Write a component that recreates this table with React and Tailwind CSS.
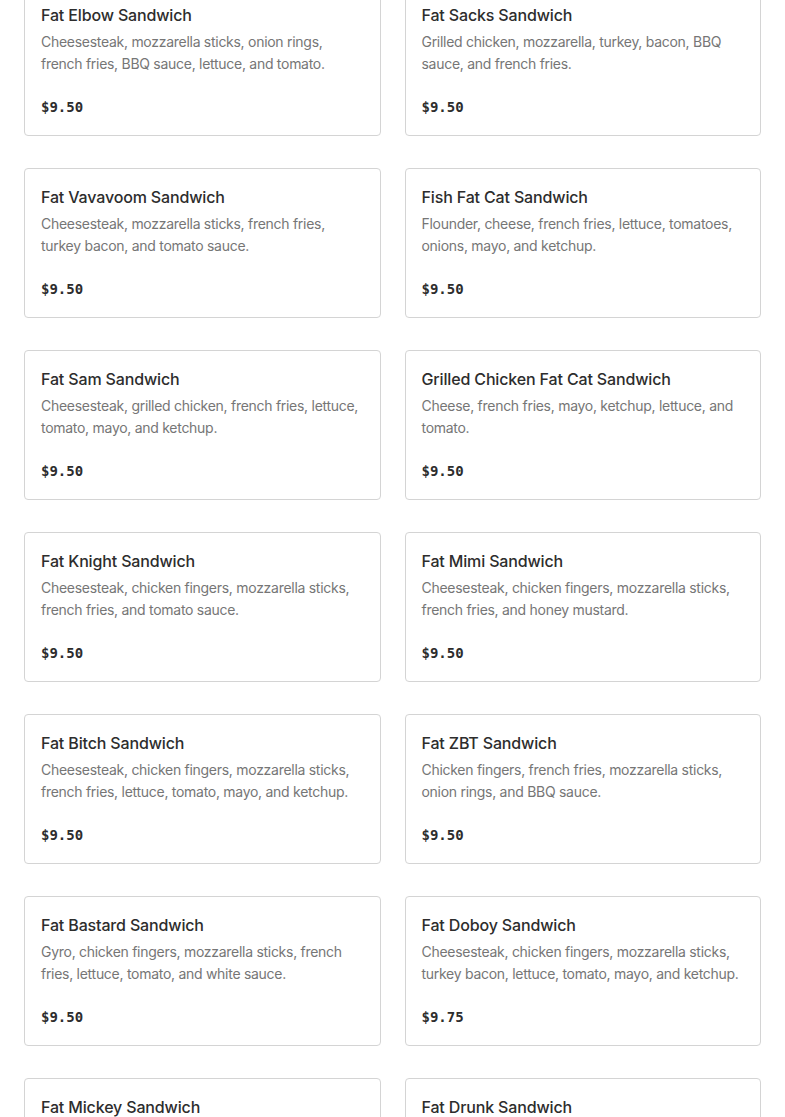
const items = [
  ["Fat Elbow Sandwich", "Cheesesteak, mozzarella sticks, onion rings, french fries, BBQ sauce, lettuce, and tomato.", "$9.50"],
  ["Fat Sacks Sandwich", "Grilled chicken, mozzarella, turkey, bacon, BBQ sauce, and french fries.", "$9.50"],
  ["Fat Vavavoom Sandwich", "Cheesesteak, mozzarella sticks, french fries, turkey bacon, and tomato sauce.", "$9.50"],
  ["Fish Fat Cat Sandwich", "Flounder, cheese, french fries, lettuce, tomatoes, onions, mayo, and ketchup.", "$9.50"],
  ["Fat Sam Sandwich", "Cheesesteak, grilled chicken, french fries, lettuce, tomato, mayo, and ketchup.", "$9.50"],
  ["Grilled Chicken Fat Cat Sandwich", "Cheese, french fries, mayo, ketchup, lettuce, and tomato.", "$9.50"],
  ["Fat Knight Sandwich", "Cheesesteak, chicken fingers, mozzarella sticks, french fries, and tomato sauce.", "$9.50"],
  ["Fat Mimi Sandwich", "Cheesesteak, chicken fingers, mozzarella sticks, french fries, and honey mustard.", "$9.50"],
  ["Fat Bitch Sandwich", "Cheesesteak, chicken fingers, mozzarella sticks, french fries, lettuce, tomato, mayo, and ketchup.", "$9.50"],
  ["Fat ZBT Sandwich", "Chicken fingers, french fries, mozzarella sticks, onion rings, and BBQ sauce.", "$9.50"],
  ["Fat Bastard Sandwich", "Gyro, chicken fingers, mozzarella sticks, french fries, lettuce, tomato, and white sauce.", "$9.50"],
  ["Fat Doboy Sandwich", "Cheesesteak, chicken fingers, mozzarella sticks, turkey bacon, lettuce, tomato, mayo, and ketchup.", "$9.75"],
  ["Fat Mickey Sandwich", "Cheesesteak, chicken fingers, mozzarella sticks, french fries, and tomato sauce.", "$9.50"],
  ["Fat Drunk Sandwich", "Cheesesteak, chicken fingers, mozzarella sticks, french fries, and tomato sauce.", "$9.50"],
];

export default function App() {
  return (
    <div className="h-[1117px] overflow-hidden bg-white" style={{ fontFamily: "Inter, 'Noto Sans', sans-serif" }}>
      <div className="grid grid-cols-2 gap-x-6 gap-y-8 px-6 mt-[-14px]">
        {items.map(([t, d, p]) => (
          <div key={t} className="h-[150px] rounded-[4px] border border-[#d4d4d4] px-4 pt-4 pb-[18px] flex flex-col">
            <div className="text-[16px] leading-6 font-medium text-[#2d2d2d] tracking-[-0.15px]">{t}</div>
            <div className="mt-1 text-[14px] leading-[22px] text-[#767676] tracking-[-0.28px]">{d}</div>
            <div className="mt-auto text-[14px] leading-5 font-bold text-[#2d2d2d]" style={{ fontFamily: "'DejaVu Sans Mono', monospace" }}>{p}</div>
          </div>
        ))}
      </div>
    </div>
  );
}
